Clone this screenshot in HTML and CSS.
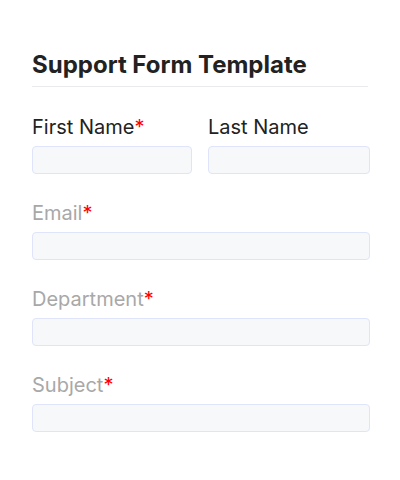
FILE: index.html
```html
<!DOCTYPE html>
<html lang="en">
<head>
<meta charset="utf-8">
<title>Support Form Template</title>
<link rel="stylesheet" href="styles.css">
</head>
<body>
<form class="form">
  <h1 class="form-title">Support Form Template</h1>
  <div class="row">
    <div class="field">
      <label class="label">First Name<span class="req">*</span></label>
      <input class="input" type="text">
    </div>
    <div class="field">
      <label class="label">Last Name</label>
      <input class="input" type="text">
    </div>
  </div>
  <div class="field">
    <label class="label muted">Email<span class="req">*</span></label>
    <input class="input" type="text">
  </div>
  <div class="field">
    <label class="label muted">Department<span class="req">*</span></label>
    <input class="input" type="text">
  </div>
  <div class="field">
    <label class="label muted">Subject<span class="req">*</span></label>
    <input class="input" type="text">
  </div>
</form>
</body>
</html>
```
FILE: styles.css
```css
* { box-sizing: border-box; }
html, body {
  margin: 0;
  background: #ffffff;
}
body {
  font-family: Inter, "Noto Sans", sans-serif;
  color: #222222;
}
.form {
  width: 338px;
  margin: 0 0 0 32px;
  padding-top: 50px;
  display: flex;
  flex-direction: column;
  gap: 27px;
}
.form-title {
  margin: 0 0 1px 0;
  width: 336px;
  font-size: 24px;
  line-height: 30px;
  font-weight: 700;
  color: #222222;
  padding-bottom: 6px;
  border-bottom: 1px solid #e9e9ee;
}
.row {
  display: grid;
  grid-template-columns: 160px 162px;
  gap: 16px;
}
.field {
  display: flex;
  flex-direction: column;
}
.label {
  font-size: 20px;
  line-height: 24px;
  margin-bottom: 7px;
  color: #222222;
}
.label.muted { color: #a8a8a8; }
.req { color: #ff0000; }
.input {
  display: block;
  width: 100%;
  height: 28px;
  margin: 0;
  padding: 0 8px;
  background: #f7f8fa;
  border: 1px solid #dfe4fb;
  border-radius: 4px;
  font: inherit;
  outline: none;
}
```
